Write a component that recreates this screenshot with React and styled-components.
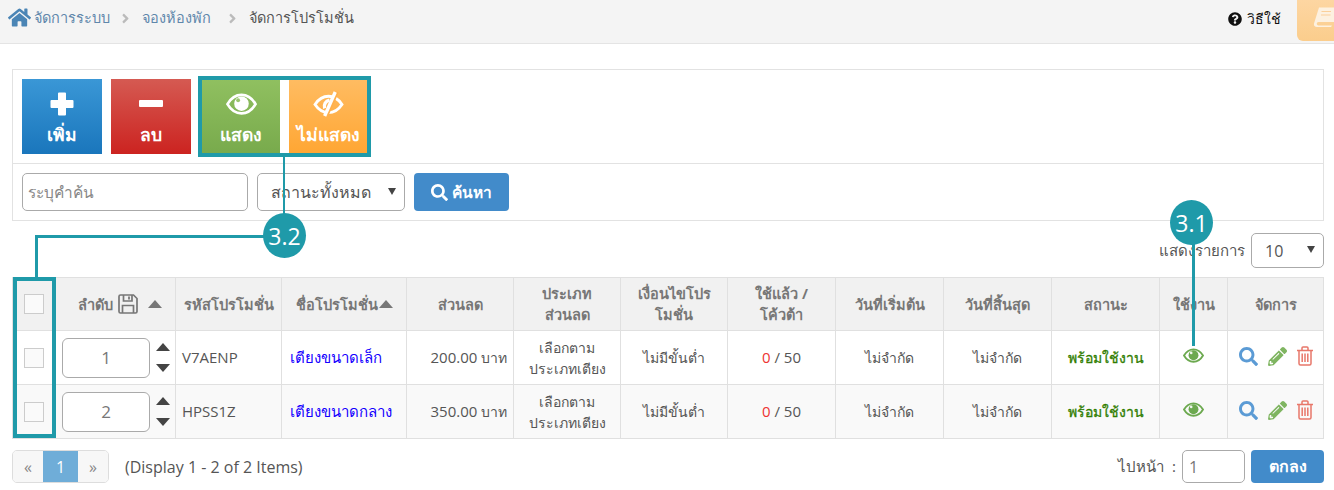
import styled, { createGlobalStyle } from "styled-components";
import { FaHome, FaAngleRight, FaQuestionCircle, FaSearch, FaPencilAlt } from "react-icons/fa";

const GlobalStyle = createGlobalStyle`
  html, body { margin: 0; padding: 0; background: #fff; }
  body { font-family: "Open Sans", "Noto Sans", sans-serif; font-size: 15px; color: #555; }
  * { box-sizing: border-box; }
`;

const Page = styled.div`
  position: relative;
  width: 1334px;
  height: 490px;
  overflow: hidden;
`;

const TopBar = styled.div`
  display: flex;
  align-items: flex-start;
  justify-content: space-between;
  height: 44px;
  background: #f4f4f4;
  border-bottom: 1px solid #e4e4e4;
  padding-left: 8px;
`;

const Crumbs = styled.div`
  display: flex;
  align-items: center;
  height: 35px;
  font-size: 14.5px;
`;

const CrumbLink = styled.span`
  min-width: ${({ $w }) => $w || 0}px;
  color: ${({ $current }) => ($current ? "#555" : "#5f87ab")};
`;

const CrumbSep = styled(FaAngleRight)`
  color: #bbb;
  font-size: 15px;
  margin: 2px 9px 0 8px;
`;

const HomeIcon = styled(FaHome)`
  color: #4b85b5;
  font-size: 23px;
  margin-right: 3px;
`;

const TopRight = styled.div`
  display: flex;
  align-items: flex-start;
`;

const Help = styled.div`
  display: flex;
  align-items: center;
  gap: 5px;
  height: 38px;
  margin-right: 16px;
  color: #111;
  font-size: 14px;
`;

const BookTab = styled.div`
  display: flex;
  align-items: center;
  justify-content: flex-end;
  width: 37px;
  height: 41px;
  background: linear-gradient(#fdd6a2, #fbcd8c);
  border-bottom-left-radius: 6px;
  padding-bottom: 8px;
`;

const FilterPanel = styled.div`
  margin: 25px 10px 0 12px;
  border: 1px solid #e2e2e2;
`;

const ActionRow = styled.div`
  display: flex;
  padding: 9px;
  border-bottom: 1px solid #e2e2e2;
`;

const ActionButton = styled.div`
  display: flex;
  flex-direction: column;
  align-items: center;
  width: ${({ $w }) => $w}px;
  height: 75px;
  margin-right: ${({ $gap }) => $gap}px;
  padding-top: 12px;
  color: #fff;
  font-size: 16px;
  font-weight: 700;
  background: linear-gradient(${({ $from }) => $from}, ${({ $to }) => $to});
`;

const ActionIcon = styled.div`
  display: flex;
  align-items: center;
  justify-content: center;
  height: 26px;
`;

const ActionLabel = styled.div`
  margin-top: 5px;
  font-size: 17.5px;
  line-height: 24px;
  white-space: nowrap;
`;

const SearchRow = styled.div`
  display: flex;
  align-items: center;
  gap: 9px;
  height: 56px;
  padding-left: 9px;
`;

const TextInput = styled.div`
  display: flex;
  align-items: center;
  width: 226px;
  height: 38px;
  padding-left: 5px;
  background: #fff;
  border: 1px solid #aaa;
  border-radius: 5px;
  color: #888;
  font-size: 15.5px;
`;

const SelectBox = styled.div`
  display: flex;
  align-items: center;
  justify-content: space-between;
  width: ${({ $w }) => $w}px;
  height: ${({ $h }) => $h}px;
  padding: 0 8px 0 13px;
  background: #fff;
  border: 1px solid #aaa;
  border-radius: 5px;
  color: #555;
  font-size: 16px;

  &::after {
    content: "";
    border-left: 4px solid transparent;
    border-right: 4px solid transparent;
    border-top: 7px solid #444;
    margin-top: -2px;
  }
`;

const SearchButton = styled.div`
  display: flex;
  align-items: center;
  justify-content: center;
  gap: 4px;
  width: 95px;
  height: 38px;
  background: #428bca;
  border-radius: 4px;
  color: #fff;
  font-size: 15.5px;
  font-weight: 700;
`;

const PerPage = styled.div`
  display: flex;
  align-items: center;
  justify-content: flex-end;
  gap: 6px;
  height: 35px;
  margin: 12px 10px 9px 0;
  font-size: 15px;
  color: #555;
`;

const Table = styled.table`
  width: 1311px;
  margin-left: 12px;
  table-layout: fixed;
  border-collapse: collapse;
`;

const Th = styled.th`
  height: 53px;
  padding: 0 4px;
  background: #f1f1f1;
  border: 1px solid #e0e0e0;
  color: #777;
  font-size: 14.5px;
  font-weight: 700;
  line-height: 21px;
  text-align: center;
`;

const Row = styled.tr`
  background: ${({ $alt }) => ($alt ? "#f9f9f9" : "#fff")};
`;

const Td = styled.td`
  height: 54px;
  padding: 0 ${({ $flush }) => ($flush ? 0 : 6)}px;
  border: 1px solid #e0e0e0;
  color: ${({ $color }) => $color || "#555"};
  font-size: ${({ $size }) => $size || 14}px;
  line-height: 21px;
  text-align: ${({ $align }) => $align || "center"};
  -webkit-text-stroke: ${({ $heavy }) => ($heavy ? "0.3px" : "0")};
`;

const Digits = styled.span`
  font-size: 15px;
  color: ${({ $color }) => $color || "inherit"};
`;

const CheckBox = styled.div`
  width: 20px;
  height: 20px;
  margin: 0 auto;
  background: #fafafa;
  border: 1px solid #ccc;
`;

const OrderWrap = styled.div`
  display: flex;
  align-items: center;
  padding-left: 6px;
  gap: 6px;
`;

const OrderInput = styled.div`
  display: flex;
  align-items: center;
  justify-content: center;
  width: 88px;
  height: 40px;
  background: #fff;
  border: 1px solid #aaa;
  border-radius: 6px;
  color: #777;
  font-size: 17px;
`;

const Arrows = styled.div`
  display: flex;
  flex-direction: column;
  gap: 13px;
`;

const Caret = styled.span`
  display: block;
  width: 0;
  height: 0;
  margin-left: ${({ $ml }) => $ml || 0}px;
  border-left: 7px solid transparent;
  border-right: 7px solid transparent;
  border-top: ${({ $down, $color }) => ($down ? `8px solid ${$color}` : "0")};
  border-bottom: ${({ $down, $color }) => ($down ? "0" : `8px solid ${$color}`)};
`;

const HeadInline = styled.span`
  display: inline-flex;
  align-items: center;
  gap: ${({ $gap }) => $gap}px;
  margin-left: ${({ $ml }) => $ml || 0}px;
  margin-top: ${({ $mt }) => $mt || 0}px;
`;

const Tools = styled.div`
  display: flex;
  align-items: center;
  justify-content: center;
  gap: 10px;
  font-size: 19px;
  margin-top: -3px;
`;

const Footer = styled.div`
  display: flex;
  align-items: center;
  justify-content: space-between;
  margin: 11px 10px 0 12px;
`;

const FooterSide = styled.div`
  display: flex;
  align-items: center;
  font-size: ${({ $size }) => $size}px;
`;

const Pager = styled.div`
  display: flex;
  height: 33px;
  margin-right: 16px;
  border: 1px solid #ddd;
  border-radius: 5px;
  overflow: hidden;
`;

const PageCell = styled.div`
  display: flex;
  align-items: center;
  justify-content: center;
  width: ${({ $w }) => $w}px;
  background: ${({ $active }) => ($active ? "#6fadd8" : "#f7f7f7")};
  color: ${({ $active }) => ($active ? "#fff" : "#888")};
  font-size: 16px;
`;

const GoInput = styled.div`
  display: flex;
  align-items: center;
  width: 63px;
  height: 33px;
  margin: 0 6px 0 6px;
  padding-left: 6px;
  border: 1px solid #aaa;
  border-radius: 5px;
  color: #777;
  font-size: 16px;
`;

const GoButton = styled.div`
  display: flex;
  align-items: center;
  justify-content: center;
  width: 73px;
  height: 33px;
  background: #428bca;
  border-radius: 4px;
  color: #fff;
  font-size: 16px;
  font-weight: 700;
`;

/* teal annotation overlays */
const Frame = styled.div`
  position: absolute;
  left: ${({ $x }) => $x}px;
  top: ${({ $y }) => $y}px;
  width: ${({ $w }) => $w}px;
  height: ${({ $h }) => $h}px;
  border: 4px solid #1f9aa9;
`;

const Line = styled.div`
  position: absolute;
  left: ${({ $x }) => $x}px;
  top: ${({ $y }) => $y}px;
  width: ${({ $w }) => $w}px;
  height: ${({ $h }) => $h}px;
  background: #1f9aa9;
`;

const Badge = styled.div`
  position: absolute;
  left: ${({ $x }) => $x}px;
  top: ${({ $y }) => $y}px;
  display: flex;
  align-items: center;
  justify-content: center;
  width: 43px;
  height: 45px;
  border-radius: 50%;
  background: #1f9aa9;
  color: #fff;
  font-size: 23px;
`;

function EyeIcon({ size = 20, color = "currentColor", hole = "#fff" }) {
  return (
    <svg width={size} height={size * 0.72} viewBox="0 0 32 23">
      <path
        d="M1.5 11.5C5 5.5 10 2 16 2s11 3.5 14.5 9.5C27 17.5 22 21 16 21S5 17.5 1.5 11.5Z"
        fill="none"
        stroke={color}
        strokeWidth="2.8"
      />
      <circle cx="16" cy="11" r="7.5" fill={color} />
      <circle cx="12.5" cy="7.5" r="2" fill={hole} opacity="0.9" />
    </svg>
  );
}

function EyeSlashIcon({ color = "#fff", bg = "#ffb04c" }) {
  return (
    <svg width="31" height="26" viewBox="0 0 32 27">
      <path
        d="M2 14C6 8 11 5.5 16 5.5s10 2.5 14 8.500c-4 6-9 8.500-14 8.500S6 20 2 14Z"
        fill="none"
        stroke={color}
        strokeWidth="3"
      />
      <path d="M17 9.500A6.500 6.500 0 0 0 12 18" fill="none" stroke={color} strokeWidth="3.500" />
      <path d="M25.500 1 14.500 26" stroke={bg} strokeWidth="2.500" />
      <path d="M23 1 12 26" stroke={color} strokeWidth="3.500" />
    </svg>
  );
}

function PlusIcon() {
  return (
    <svg width="24" height="24" viewBox="0 0 24 24">
      <path d="M8 1.5A1 1 0 0 1 9 .5h6a1 1 0 0 1 1 1V8h6.5a1 1 0 0 1 1 1v6a1 1 0 0 1-1 1H16v6.5a1 1 0 0 1-1 1H9a1 1 0 0 1-1-1V16H1.5a1 1 0 0 1-1-1V9a1 1 0 0 1 1-1H8Z" fill="#fff" />
    </svg>
  );
}

function MinusIcon() {
  return (
    <svg width="24" height="8" viewBox="0 0 24 8">
      <rect width="24" height="7" rx="1" fill="#fff" />
    </svg>
  );
}

function BookIcon() {
  return (
    <svg width="21" height="20" viewBox="0 0 21 20">
      <path d="M6 .5H21V15H5.5C4.5 15 3.8 15.8 3.8 16.8S4.5 18.5 5.5 18.5H19L18 20H4C1.8 20 .5 18.500 1 16.500Z" fill="#fdf1e0" />
      <path d="M8.5 4.5H18M8 8H17.5" stroke="#fbd09a" strokeWidth="1.2" />
    </svg>
  );
}

function FloppyIcon() {
  return (
    <svg width="20" height="20" viewBox="0 0 20 20" fill="none" stroke="#777" strokeWidth="1.7">
      <path d="M1 2.5C1 1.5 1.5 1 2.5 1H15.5L19 4.5V17.5C19 18.5 18.5 19 17.5 19H2.5C1.5 19 1 18.5 1 17.5Z" />
      <path d="M5.5 1V7H14V1M4.5 19V11.5H15.5V19" />
      <path d="M11 2.5V5.5" strokeWidth="1.8" />
    </svg>
  );
}

function TrashIcon() {
  return (
    <svg width="16" height="20" viewBox="0 0 16 20" fill="none" stroke="#e8776a" strokeWidth="1.5">
      <path d="M0 4.5H16M5 4.5V2C5 1.3 5.5 1 6 1H10C10.5 1 11 1.3 11 2V4.5" />
      <path d="M2 4.5V17.5C2 18.5 2.7 19 3.5 19H12.5C13.3 19 14 18.5 14 17.5V4.5" />
      <path d="M5.2 7.5V16M8 7.5V16M10.8 7.5V16" />
    </svg>
  );
}

const columns = [43, 120, 106, 125, 107, 107, 107, 108, 108, 108, 108, 68, 96];

const promos = [
  { order: 1, code: "V7AENP", name: "เตียงขนาดเล็ก", amount: "200.00" },
  { order: 2, code: "HPSS1Z", name: "เตียงขนาดกลาง", amount: "350.00" },
];

export default function App() {
  return (
    <Page>
      <GlobalStyle />
      <TopBar>
        <Crumbs>
          <HomeIcon />
          <CrumbLink>จัดการระบบ</CrumbLink>
          <CrumbSep />
          <CrumbLink $w={75}>จองห้องพัก</CrumbLink>
          <CrumbSep />
          <CrumbLink $current>จัดการโปรโมชั่น</CrumbLink>
        </Crumbs>
        <TopRight>
          <Help>
            <FaQuestionCircle size={14} />
            วิธีใช้
          </Help>
          <BookTab>
            <BookIcon />
          </BookTab>
        </TopRight>
      </TopBar>

      <FilterPanel>
        <ActionRow>
          <ActionButton $w={80} $gap={9} $from="#3a97d6" $to="#1a76bc">
            <ActionIcon><PlusIcon /></ActionIcon>
            <ActionLabel>เพิ่ม</ActionLabel>
          </ActionButton>
          <ActionButton $w={80} $gap={11} $from="#d55a52" $to="#cc2320">
            <ActionIcon><MinusIcon /></ActionIcon>
            <ActionLabel>ลบ</ActionLabel>
          </ActionButton>
          <ActionButton $w={78} $gap={9} $from="#90c060" $to="#78aa4c">
            <ActionIcon><EyeIcon size={31} color="#fff" hole="#8fbf5f" /></ActionIcon>
            <ActionLabel>แสดง</ActionLabel>
          </ActionButton>
          <ActionButton $w={78} $gap={0} $from="#ffbc62" $to="#ffa633">
            <ActionIcon><EyeSlashIcon /></ActionIcon>
            <ActionLabel>ไม่แสดง</ActionLabel>
          </ActionButton>
        </ActionRow>
        <SearchRow>
          <TextInput>ระบุคำค้น</TextInput>
          <SelectBox $w={148} $h={38}>สถานะทั้งหมด</SelectBox>
          <SearchButton>
            <FaSearch size={17} />
            ค้นหา
          </SearchButton>
        </SearchRow>
      </FilterPanel>

      <PerPage>
        แสดงรายการ
        <SelectBox $w={73} $h={35}>10</SelectBox>
      </PerPage>

      <Table>
        <colgroup>
          {columns.map((w, i) => (
            <col key={i} style={{ width: w }} />
          ))}
        </colgroup>
        <thead>
          <tr>
            <Th><CheckBox /></Th>
            <Th>
              <HeadInline $gap={5} $ml={9}>
                ลำดับ <FloppyIcon />
                <Caret $color="#777" $ml={5} />
              </HeadInline>
            </Th>
            <Th>รหัสโปรโมชั่น</Th>
            <Th>
              <HeadInline $gap={1} $mt={-5}>
                ชื่อโปรโมชั่น <Caret $color="#777" />
              </HeadInline>
            </Th>
            <Th>ส่วนลด</Th>
            <Th>ประเภท<br />ส่วนลด</Th>
            <Th>เงื่อนไขโปร<br />โมชั่น</Th>
            <Th>ใช้แล้ว /<br />โค้วต้า</Th>
            <Th>วันที่เริ่มต้น</Th>
            <Th>วันที่สิ้นสุด</Th>
            <Th>สถานะ</Th>
            <Th>ใช้งาน</Th>
            <Th>จัดการ</Th>
          </tr>
        </thead>
        <tbody>
          {promos.map((p, i) => (
            <Row key={p.code} $alt={i % 2 === 1}>
              <Td><CheckBox /></Td>
              <Td $flush>
                <OrderWrap>
                  <OrderInput>{p.order}</OrderInput>
                  <Arrows>
                    <Caret $color="#444" />
                    <Caret $color="#444" $down />
                  </Arrows>
                </OrderWrap>
              </Td>
              <Td $align="left" $size={15}>{p.code}</Td>
              <Td $align="left" $size={15} $color="#1400ff" style={{ paddingLeft: 8 }}>{p.name}</Td>
              <Td $align="right"><Digits>{p.amount}</Digits> บาท</Td>
              <Td>เลือกตาม<br />ประเภทเตียง</Td>
              <Td>ไม่มีขั้นต่ำ</Td>
              <Td><Digits><Digits $color="#e33">0</Digits> / 50</Digits></Td>
              <Td>ไม่จำกัด</Td>
              <Td>ไม่จำกัด</Td>
              <Td $color="#2f7d00" $heavy>พร้อมใช้งาน</Td>
              <Td><EyeIcon size={21} color="#6ca94f" hole="#fff" /></Td>
              <Td>
                <Tools>
                  <FaSearch color="#5b9bd5" />
                  <FaPencilAlt color="#7fb561" />
                  <TrashIcon />
                </Tools>
              </Td>
            </Row>
          ))}
        </tbody>
      </Table>

      <Footer>
        <FooterSide $size={16}>
          <Pager>
            <PageCell $w={30}>«</PageCell>
            <PageCell $w={35} $active>1</PageCell>
            <PageCell $w={30}>»</PageCell>
          </Pager>
          (Display 1 - 2 of 2 Items)
        </FooterSide>
        <FooterSide $size={15}>
          ไปหน้า &nbsp;:
          <GoInput>1</GoInput>
          <GoButton>ตกลง</GoButton>
        </FooterSide>
      </Footer>

      <Frame $x={198} $y={76} $w={173} $h={81} />
      <Line $x={283} $y={157} $w={2} $h={60} />
      <Line $x={35} $y={235} $w={230} $h={3} />
      <Line $x={35} $y={235} $w={3} $h={42} />
      <Frame $x={13} $y={277} $w={43} $h={161} />
      <Badge $x={263} $y={213}>3.2</Badge>
      <Line $x={1192} $y={240} $w={3} $h={106} />
      <Badge $x={1170} $y={200}>3.1</Badge>
    </Page>
  );
}
